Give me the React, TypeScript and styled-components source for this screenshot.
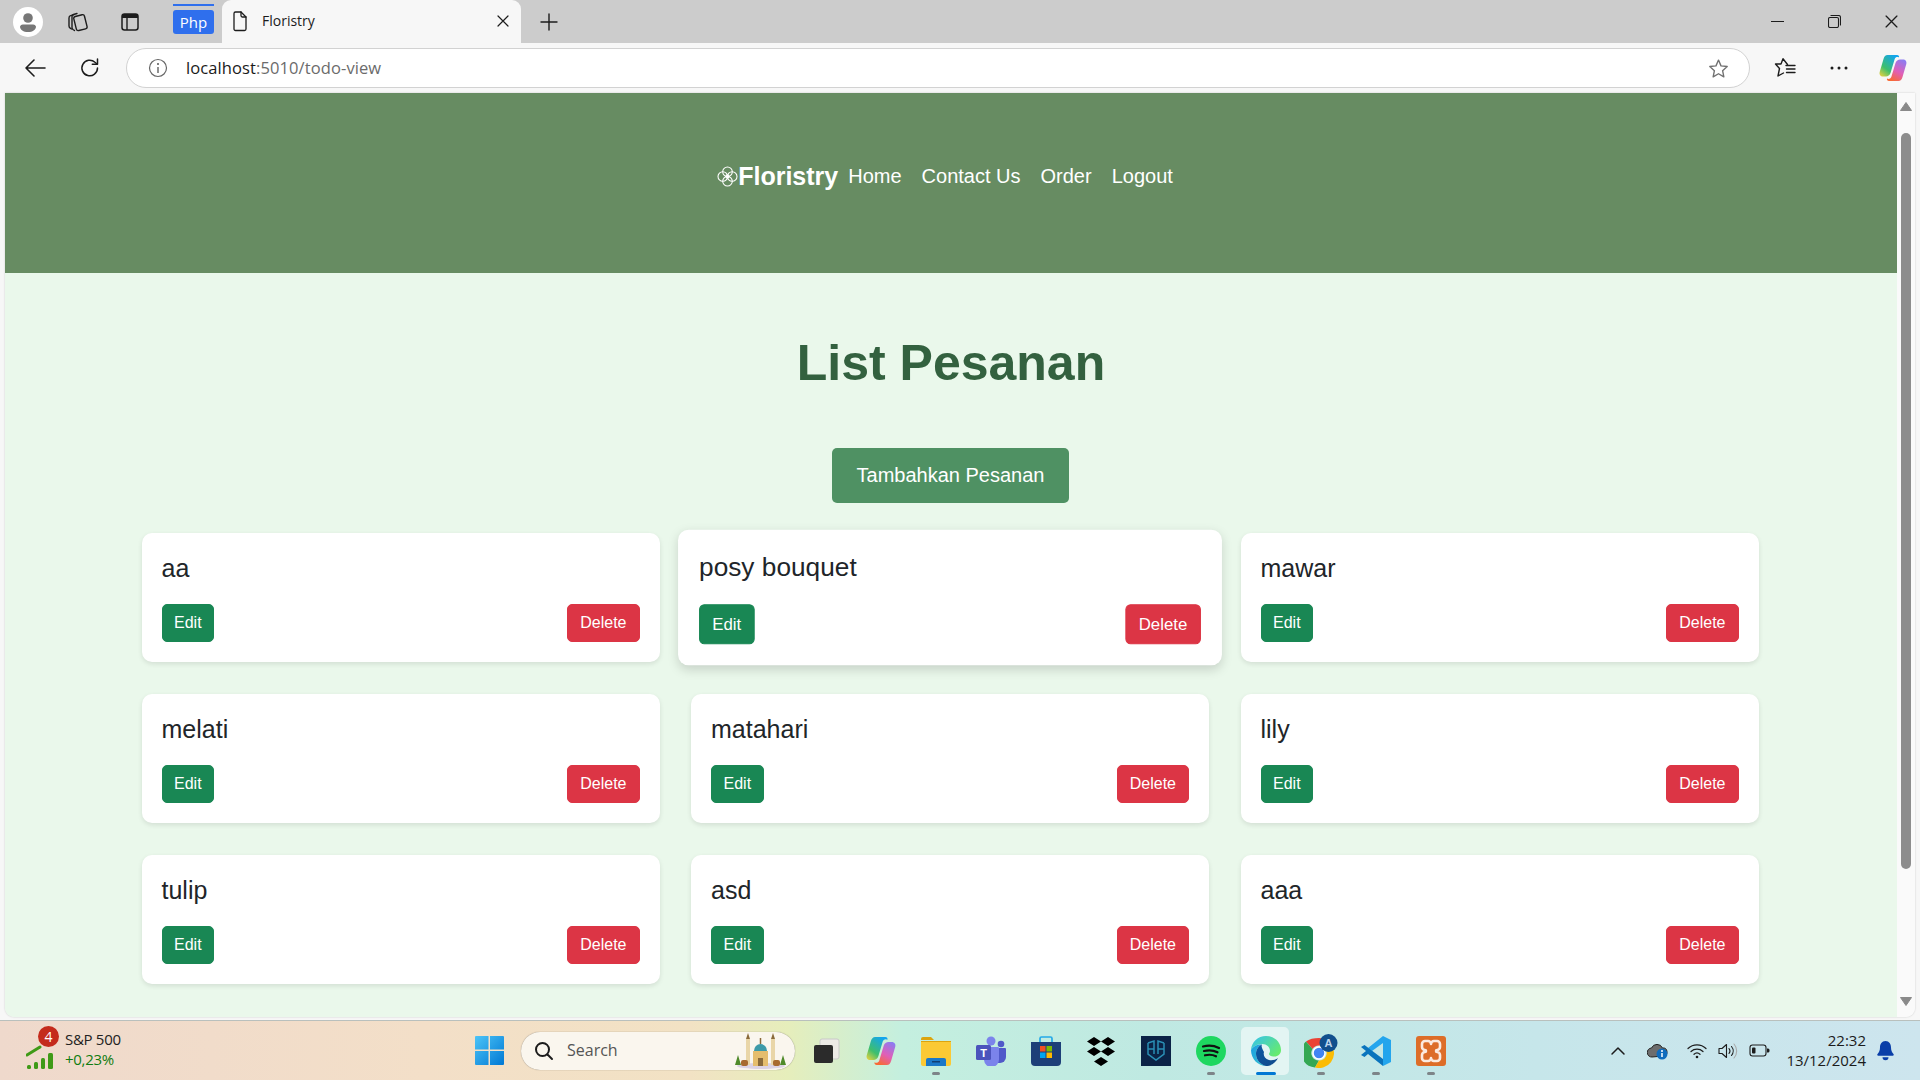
import React from "react";
import styled, { createGlobalStyle } from "styled-components";

const Global = createGlobalStyle`
  html, body { margin: 0; padding: 0; height: 100%; overflow: hidden; background: #f7f7f7; }
  #root { height: 100%; }
  * { box-sizing: border-box; }
`;

const Screen = styled.div`
  width: 1920px;
  height: 1080px;
  display: flex;
  flex-direction: column;
  overflow: hidden;
  background: #f7f7f7;
  font-family: "Liberation Sans", Arial, sans-serif;
`;

/* ---------- tab strip ---------- */
const TabStrip = styled.div`
  height: 43px;
  flex: none;
  background: #cccccc;
  display: flex;
  align-items: center;
  padding-left: 13px;
`;
const StripSlot = styled.div<{ $w: number }>`
  width: ${(p) => p.$w}px;
  height: 43px;
  flex: none;
  display: flex;
  align-items: center;
  justify-content: center;
`;
const PhpGroup = styled.div`
  position: relative;
  width: 41px;
  height: 24px;
  margin: 0 8px 0 0;
  flex: none;
  border-radius: 3px;
  background: #2f6fed;
  color: #fff;
  font: 15px "Open Sans", sans-serif;
  display: flex;
  align-items: center;
  justify-content: center;
  &::before {
    content: "";
    position: absolute;
    left: 0;
    right: 0;
    top: -6px;
    height: 2px;
    background: #2f6fed;
  }
`;
const ActiveTab = styled.div`
  width: 299px;
  height: 43px;
  flex: none;
  background: #f7f7f7;
  border-radius: 9px 9px 0 0;
  display: flex;
  align-items: center;
  padding: 0 12px 2px 9px;
  gap: 13px;
  color: #1c1c1c;
  font: 14px "Open Sans", sans-serif;
`;
const TabTitle = styled.span`
  flex: 1;
`;
const WindowControls = styled.div`
  margin-left: auto;
  display: flex;
  align-items: center;
  gap: 44px;
  padding-right: 22px;
`;

/* ---------- address bar ---------- */
const Toolbar = styled.div`
  height: 50px;
  flex: none;
  background: #f7f7f7;
  display: flex;
  align-items: center;
  padding-left: 24px;
`;
const ToolSlot = styled.div<{ $w: number }>`
  width: ${(p) => p.$w}px;
  height: 24px;
  flex: none;
  display: flex;
  align-items: center;
  justify-content: center;
`;
const AddressBar = styled.div`
  width: 1624px;
  height: 40px;
  flex: none;
  background: #fff;
  border: 1px solid #d2d2d2;
  border-radius: 20px;
  display: flex;
  align-items: center;
  padding: 0 20px 0 21px;
  font: 16.5px "Open Sans", sans-serif;
  color: #1a1a1a;
`;
const Url = styled.span`
  margin-left: 18px;
  padding-bottom: 2px;
  flex: 1;
  letter-spacing: 0.1px;
`;
const UrlRest = styled.span`
  color: #6b6b6b;
`;
const ToolActions = styled.div`
  display: flex;
  align-items: center;
  margin-left: 24px;
  gap: 33px;
`;
const CopilotSlot = styled.div`
  display: flex;
  margin-left: -3px;
`;

/* ---------- page ---------- */
const Viewport = styled.div`
  height: 924px;
  flex: none;
  margin: 0 5px 0 5px;
  display: flex;
  overflow: hidden;
  border-radius: 0 0 9px 9px;
  box-shadow: 0 0 2px rgba(0, 0, 0, 0.2);
`;
const Page = styled.div`
  flex: 1;
  min-width: 0;
  background: #eaf8eb;
  overflow: hidden;
`;
const Header = styled.header`
  height: 180px;
  background: #678c62;
  display: flex;
  justify-content: center;
  align-items: flex-start;
  padding: 68px 12px 0 0;
  color: #fff;
`;
const Brand = styled.a`
  display: flex;
  align-items: center;
  font-size: 25px;
  font-weight: 700;
  line-height: 30px;
  margin-right: 10px;
  color: #fff;
`;
const NavList = styled.nav`
  display: flex;
  gap: 20px;
  font-size: 20px;
  line-height: 30px;
`;
const NavLink = styled.a`
  color: #fff;
`;
const Main = styled.main`
  display: flex;
  flex-direction: column;
  align-items: center;
  padding: 60px 0 0;
`;
const Title = styled.h1`
  margin: 0;
  font-size: 50px;
  line-height: 60px;
  font-weight: 700;
  color: #33613f;
`;
const AddButton = styled.button`
  margin: 55px 1px 0 0;
  width: 237px;
  height: 55px;
  border: none;
  border-radius: 5px;
  background: #4f9163;
  color: #fff;
  font: 20px "Liberation Sans", Arial, sans-serif;
  padding-top: 1px;
`;
const Grid = styled.div`
  margin: 30px 2px 0 0;
  display: grid;
  grid-template-columns: repeat(3, 518px);
  column-gap: 31.500px;
  row-gap: 32px;
`;
const Card = styled.div<{ $hover?: boolean }>`
  height: 129px;
  padding: 20px;
  background: #fff;
  border-radius: 10px;
  display: flex;
  flex-direction: column;
  box-shadow: ${(p) =>
    p.$hover ? "0 4px 10px rgba(0,0,0,.15)" : "0 2px 5px rgba(0,0,0,.1)"};
  transform: ${(p) => (p.$hover ? "scale(1.05)" : "none")};
`;
const CardTitle = styled.h5`
  margin: 0;
  font-size: 25px;
  line-height: 30px;
  font-weight: 400;
  color: #212529;
`;
const CardActions = styled.div`
  margin-top: auto;
  display: flex;
  justify-content: space-between;
`;
const ActionButton = styled.button<{ $danger?: boolean }>`
  height: 38px;
  padding: 0 ${(p) => (p.$danger ? 12 : 11.5)}px;
  border: 1px solid ${(p) => (p.$danger ? "#dc3545" : "#198754")};
  border-radius: 5px;
  background: ${(p) => (p.$danger ? "#dc3545" : "#198754")};
  color: #fff;
  font: 16px "Liberation Sans", Arial, sans-serif;
`;

/* ---------- scrollbar ---------- */
const Scrollbar = styled.div`
  width: 18px;
  flex: none;
  background: #fafafa;
  display: flex;
  flex-direction: column;
  align-items: center;
  padding-top: 9px;
`;
const ScrollThumb = styled.div`
  margin-top: 22px;
  width: 10px;
  height: 736px;
  border-radius: 5px;
  background: #8d8d8d;
`;
const ScrollDown = styled.div`
  margin-top: auto;
  margin-bottom: 7px;
`;

/* ---------- taskbar ---------- */
const Taskbar = styled.div`
  margin-top: 3px;
  height: 60px;
  flex: none;
  display: flex;
  align-items: center;
  border-top: 1px solid #b9c0bd;
  background: linear-gradient(
    90deg,
    #efd9cc 0%,
    #f3dfc8 22%,
    #f2e2c4 36%,
    #e6eebb 41%,
    #c4efdf 47%,
    #bfe9e2 60%,
    #c6e6ea 80%,
    #cde5ee 100%
  );
`;
const Widget = styled.div`
  position: relative;
  width: 475px;
  flex: none;
  padding-left: 26px;
  display: flex;
  align-items: center;
  gap: 9px;
`;
const Badge = styled.span`
  position: absolute;
  left: 38px;
  top: -3px;
  width: 21px;
  height: 21px;
  border-radius: 50%;
  background: #c42b1c;
  color: #fff;
  font: 14px/21px "Open Sans", sans-serif;
  text-align: center;
`;
const WidgetText = styled.div`
  display: flex;
  flex-direction: column;
  margin-bottom: 3px;
  font: 15px/20px "Open Sans", sans-serif;
  letter-spacing: -0.3px;
  color: #222;
`;
const WidgetDelta = styled.span`
  color: #107c10;
`;
const StartSlot = styled.div`
  width: 46px;
  flex: none;
  display: flex;
`;
const SearchBox = styled.div`
  width: 274px;
  height: 38px;
  flex: none;
  border-radius: 19px;
  background: #faf6ee;
  box-shadow: 0 0 1px rgba(0, 0, 0, 0.5);
  display: flex;
  align-items: center;
  padding: 0 6px 0 13px;
  gap: 13px;
  font: 16px "Open Sans", sans-serif;
  color: #555;
`;
const SearchLabel = styled.span`
  flex: 1;
  padding-bottom: 1px;
`;
const AppRow = styled.div`
  display: flex;
  margin-left: 3px;
`;
const AppSlot = styled.div<{ $active?: boolean; $dot?: boolean }>`
  position: relative;
  width: 55px;
  height: 48px;
  display: flex;
  align-items: center;
  justify-content: center;
  &::before {
    content: "";
    position: absolute;
    left: 3px;
    right: 4px;
    top: 0;
    bottom: 0;
    border-radius: 5px;
    background: ${(p) => (p.$active ? "rgba(255,255,255,.55)" : "transparent")};
  }
  &::after {
    content: "";
    display: ${(p) => (p.$dot || p.$active ? "block" : "none")};
    position: absolute;
    left: 50%;
    bottom: 0;
    transform: translateX(-50%);
    width: ${(p) => (p.$active ? 20 : 8)}px;
    height: 3px;
    border-radius: 2px;
    background: ${(p) => (p.$active ? "#0078d4" : "#7d8488")};
  }
  svg {
    position: relative;
    z-index: 1;
  }
`;
const Tray = styled.div`
  margin-left: auto;
  display: flex;
  align-items: center;
  padding-right: 26px;
`;
const TrayIcon = styled.div<{ $w: number }>`
  width: ${(p) => p.$w}px;
  display: flex;
  justify-content: center;
  flex: none;
`;
const Clock = styled.div`
  width: 88px;
  margin-bottom: 2px;
  text-align: right;
  font: 15px/20px "Open Sans", sans-serif;
  color: #1b1b1b;
`;
const BellSlot = styled.div`
  margin-left: 11px;
  display: flex;
`;

/* ---------- icons ---------- */
type IP = { s?: number };
const stroke = { fill: "none", stroke: "#1c1c1c", strokeWidth: 1.4, strokeLinecap: "round", strokeLinejoin: "round" } as const;

const Profile = () => (
  <svg width="30" height="30" viewBox="0 0 30 30">
    <circle cx="15" cy="15" r="15" fill="#fff" />
    <circle cx="15" cy="11" r="4.8" fill="#777" />
    <path d="M7 19.5a3 3 0 0 1 3-2h10a3 3 0 0 1 3 2c0 3.5-3.5 5.5-8 5.5s-8-2-8-5.5z" fill="#777" />
  </svg>
);
const Collections = () => (
  <svg width="22" height="22" viewBox="0 0 22 22" {...stroke}>
    <path d="M3 7c0-1 .6-2 1.6-2.3L8 3.6M5.500 18l-1-.6C3.500 16.800 3 15.800 3 15V7" />
    <path d="M6 5.500c0-1 .7-1.700 1.500-2L11 2.500M8.500 19.500 7 18.500c-.7-.5-1-1.200-1-2V5.500" />
    <rect x="9" y="4.500" width="11" height="14.500" rx="2" transform="rotate(-14 14 12)" />
  </svg>
);
const VerticalTabs = () => (
  <svg width="20" height="20" viewBox="0 0 20 20">
    <rect x="2" y="2" width="16" height="16" rx="2.500" fill="none" stroke="#1c1c1c" strokeWidth="1.500" />
    <path d="M2 4.500a2.500 2.500 0 0 1 2.500-2.500h11a2.500 2.500 0 0 1 2.500 2.500V6H2z" fill="#1c1c1c" />
    <path d="M7 6v12" stroke="#1c1c1c" strokeWidth="1.400" />
  </svg>
);
const Doc = () => (
  <svg width="18" height="22" viewBox="0 0 18 22" {...stroke} strokeWidth={1.3}>
    <path d="M3 3.500A1.500 1.500 0 0 1 4.500 2H10l5 5v12a1.500 1.500 0 0 1-1.500 1.500h-9A1.500 1.500 0 0 1 3 19z" />
    <path d="M10 2v3.500A1.500 1.500 0 0 0 11.500 7H15" />
  </svg>
);
const Cross = ({ s = 12 }: IP) => (
  <svg width={s} height={s} viewBox="0 0 12 12" {...stroke} strokeWidth={1.2}>
    <path d="M1 1l10 10M11 1L1 11" />
  </svg>
);
const Plus = () => (
  <svg width="18" height="18" viewBox="0 0 18 18" {...stroke} strokeWidth={1.4}>
    <path d="M9 1v16M1 9h16" />
  </svg>
);
const Minimize = () => (
  <svg width="13" height="13" viewBox="0 0 13 13" {...stroke} strokeWidth={1.1}>
    <path d="M0 6.500h13" />
  </svg>
);
const Restore = () => (
  <svg width="13" height="13" viewBox="0 0 13 13" {...stroke} strokeWidth={1.1}>
    <rect x="0.500" y="2.500" width="10" height="10" rx="1.500" />
    <path d="M3 .500h7.500a2 2 0 0 1 2 2V10" />
  </svg>
);
const Back = () => (
  <svg width="22" height="20" viewBox="0 0 22 20" {...stroke} strokeWidth={1.6}>
    <path d="M21 10H2M10 2l-8 8 8 8" />
  </svg>
);
const Refresh = () => (
  <svg width="22" height="22" viewBox="0 0 22 22" {...stroke} strokeWidth={1.5}>
    <path d="M18.500 11a7.800 7.800 0 1 1-2.500-5.700L18 7" />
    <path d="M18.500 2v5.200h-5.200" />
  </svg>
);
const Info = () => (
  <svg width="20" height="20" viewBox="0 0 20 20">
    <circle cx="10" cy="10" r="8.500" fill="none" stroke="#666" strokeWidth="1.200" />
    <circle cx="10" cy="6" r="1" fill="#555" />
    <path d="M10 9v6" stroke="#555" strokeWidth="1.300" />
  </svg>
);
const StarPts = "10,2 12.400,7.500 18.300,8.100 13.900,12.100 15.100,18 10,15 4.900,18 6.100,12.100 1.700,8.100 7.600,7.500";
const Star = () => (
  <svg width="21" height="21" viewBox="0 0 20 20">
    <polygon points={StarPts} fill="none" stroke="#707070" strokeWidth="1.300" strokeLinejoin="round" />
  </svg>
);
const Favorites = () => (
  <svg width="22" height="22" viewBox="0 0 22 22" {...stroke} strokeWidth={1.4}>
    <path d="M13.500 7.500 9 1.800 7 7H1.500L5.500 11.500 4 19l5.500-3" />
    <path d="M12 8.500h9M12.500 12h8.500M12.500 15.500h8.500" />
  </svg>
);
const More = () => (
  <svg width="20" height="6" viewBox="0 0 20 6">
    <circle cx="3" cy="3" r="1.500" fill="#1c1c1c" />
    <circle cx="10" cy="3" r="1.500" fill="#1c1c1c" />
    <circle cx="17" cy="3" r="1.500" fill="#1c1c1c" />
  </svg>
);
const Copilot = ({ id, s = 28 }: { id: string; s?: number }) => (
  <svg width={s} height={s} viewBox="0 0 28 28">
    <defs>
      <linearGradient id={`${id}a`} x1="0" y1="1" x2="0.700" y2="0">
        <stop offset="0" stopColor="#f5d33c" />
        <stop offset="0.400" stopColor="#3fbf6c" />
        <stop offset="1" stopColor="#12a5ee" />
      </linearGradient>
      <linearGradient id={`${id}b`} x1="0.300" y1="1" x2="0.800" y2="0">
        <stop offset="0" stopColor="#f86a35" />
        <stop offset="0.450" stopColor="#e05fb8" />
        <stop offset="1" stopColor="#8b7cf2" />
      </linearGradient>
    </defs>
    <path d="M8.500 1H18c1.500 0 2.500 1.200 2 2.500-1.500-1-3.500-.5-4.300 1.500L11.500 19c-.8 2.300-2.500 3.500-4.500 3.500H4C1.500 22.500 0 20.500.7 18L4.500 5C5.200 2.500 6.500 1 8.500 1z" fill={`url(#${id}a)`} />
    <path d="M19.500 27H10c-1.500 0-2.500-1.200-2-2.500 1.500 1 3.500.5 4.300-1.500L16.500 9c.8-2.300 2.500-3.500 4.500-3.500h3c2.500 0 4 2 3.300 4.500L23.500 23c-.7 2.500-2 4-4 4z" fill={`url(#${id}b)`} />
  </svg>
);
const Flower = () => (
  <svg width="21" height="21" viewBox="0 0 21 21" fill="none" stroke="#fff" strokeWidth="1.100">
    <circle cx="10.500" cy="5.800" r="4.800" />
    <circle cx="10.500" cy="15.200" r="4.800" />
    <circle cx="5.800" cy="10.500" r="4.800" />
    <circle cx="15.200" cy="10.500" r="4.800" />
    <circle cx="10.500" cy="10.500" r="1.600" fill="#fff" />
  </svg>
);
const ScrollArrow = ({ down }: { down?: boolean }) => (
  <svg width="12" height="9" viewBox="0 0 12 9">
    <path d={down ? "M0.500 0.500h11L6 8.500z" : "M6 .5l5.500 8H.5z"} fill="#8a8a8a" stroke="#8a8a8a" strokeLinejoin="round" />
  </svg>
);
const Signal = () => (
  <svg width="30" height="36" viewBox="0 0 30 36">
    <path d="M1 22 14 14" stroke="#3f9a17" strokeWidth="3" strokeLinecap="round" fill="none" />
    <rect x="1" y="32" width="4" height="4" rx="1.500" fill="#3f9a17" />
    <rect x="8" y="29" width="4" height="7" rx="1.500" fill="#3f9a17" />
    <rect x="15" y="25" width="4" height="11" rx="1.500" fill="#3f9a17" />
    <rect x="22" y="20" width="5" height="16" rx="1.500" fill="#3f9a17" />
  </svg>
);
const Windows = () => (
  <svg width="29" height="29" viewBox="0 0 29 29">
    <defs>
      <linearGradient id="win" x1="0" y1="0" x2="1" y2="1">
        <stop offset="0" stopColor="#4cc4f7" />
        <stop offset="1" stopColor="#0078d4" />
      </linearGradient>
    </defs>
    <path d="M1 0h12.500v13.500H0V1a1 1 0 0 1 1-1zM15 0h13a1 1 0 0 1 1 1v12.500H15zM0 15h13.500v14H1a1 1 0 0 1-1-1zM15 15h14v13a1 1 0 0 1-1 1H15z" fill="url(#win)" />
  </svg>
);
const SearchIcon = () => (
  <svg width="20" height="20" viewBox="0 0 20 20" fill="none" stroke="#1c1c1c" strokeWidth="2" strokeLinecap="round">
    <circle cx="8.500" cy="8.500" r="6.500" />
    <path d="M13.500 13.500 18 18" />
  </svg>
);
const Mosque = () => (
  <svg width="56" height="36" viewBox="0 0 56 36">
    <ellipse cx="28" cy="33" rx="24" ry="3" fill="#dcd3e4" />
    <rect x="13" y="6" width="4" height="26" fill="#e9d6a8" />
    <rect x="38" y="6" width="4" height="26" fill="#e9d6a8" />
    <path d="M13 6l2-6 2 6zM38 6l2-6 2 6z" fill="#8a6a3a" />
    <rect x="20" y="18" width="15" height="15" fill="#e5bd6d" />
    <path d="M21 18a6.500 7 0 0 1 13 0z" fill="#3d9aa8" />
    <path d="M27.500 5v6" stroke="#8a6a3a" strokeWidth="1.500" />
    <rect x="25" y="25" width="5" height="8" fill="#8a6a3a" />
    <path d="M2 32l3-10 3 10zM47 32l3-10 3 10z" fill="#4f8a2a" />
    <rect x="8" y="27" width="7" height="6" rx="2" fill="#a86a2f" />
    <rect x="40" y="27" width="7" height="6" rx="2" fill="#a86a2f" />
  </svg>
);
const TaskView = () => (
  <svg width="28" height="28" viewBox="0 0 28 28">
    <rect x="8" y="2" width="19" height="20" rx="2" fill="#eceae6" stroke="#c9c9c9" />
    <rect x="2" y="8" width="19" height="18" rx="2" fill="#2b2b2b" />
  </svg>
);
const Explorer = () => (
  <svg width="30" height="30" viewBox="0 0 30 30">
    <path d="M0 3a2 2 0 0 1 2-2h8l3 3h-13z" fill="#dca40e" />
    <path d="M0 5h28a2 2 0 0 1 2 2v21a2 2 0 0 1-2 2H2a2 2 0 0 1-2-2z" fill="#fbc934" />
    <path d="M0 5h30v1H0z" fill="#dca40e" />
    <path d="M5 24a2 2 0 0 1 2-2h16a2 2 0 0 1 2 2v6H5z" fill="#1a78c8" />
    <rect x="11" y="25" width="8" height="1.500" fill="#0f3f74" />
  </svg>
);
const Teams = () => (
  <svg width="30" height="30" viewBox="0 0 30 30">
    <circle cx="15" cy="5" r="4.500" fill="#7b83eb" />
    <circle cx="25" cy="8" r="3.300" fill="#5059c9" />
    <path d="M20 12h9a1 1 0 0 1 1 1v8a6 6 0 0 1-6 6h-4z" fill="#5059c9" />
    <path d="M8 11h14a1 1 0 0 1 1 1v11a7 7 0 0 1-15 1z" fill="#7b83eb" />
    <rect x="0" y="9" width="15" height="15" rx="1.500" fill="#4b53bc" />
    <text x="7.500" y="21" textAnchor="middle" fontSize="11" fontWeight="700" fill="#fff" fontFamily="Liberation Sans">T</text>
  </svg>
);
const Store = () => (
  <svg width="30" height="30" viewBox="0 0 30 30">
    <path d="M9 6V2.500A1.500 1.500 0 0 1 10.500 1h9A1.500 1.500 0 0 1 21 2.500V6" fill="none" stroke="#25a9e8" strokeWidth="1.700" />
    <path d="M0 6h30v20a4 4 0 0 1-4 4H4a4 4 0 0 1-4-4z" fill="#1d3f78" />
    <rect x="9" y="10" width="5.500" height="5.500" fill="#f25022" />
    <rect x="15.500" y="10" width="5.500" height="5.500" fill="#7fba00" />
    <rect x="9" y="16.500" width="5.500" height="5.500" fill="#00a4ef" />
    <rect x="15.500" y="16.500" width="5.500" height="5.500" fill="#ffb900" />
  </svg>
);
const Dropbox = () => (
  <svg width="30" height="30" viewBox="0 0 30 30" fill="#000">
    <path d="M8 1 15 5.500 8 10 1 5.500zM22 1 29 5.500 22 10 15 5.500zM8 11 15 15.500 8 20 1 15.500zM22 11 29 15.500 22 20 15 15.500zM15 21 22 25.500 15 30 8 25.500z" />
  </svg>
);
const Shield = () => (
  <svg width="30" height="30" viewBox="0 0 30 30">
    <rect width="30" height="30" fill="#0b2347" />
    <path d="M7 7l6-2v13M23 7l-6-2v13M7 7v11l8 6 8-6V7M7 13h6M17 13h6" fill="none" stroke="#2a8fb5" strokeWidth="1.500" />
  </svg>
);
const Spotify = () => (
  <svg width="30" height="30" viewBox="0 0 30 30">
    <circle cx="15" cy="15" r="15" fill="#1ed760" />
    <path d="M7 10.500c5-1.300 11-1 16 1.500M8 15c4.500-1.100 9.500-.8 13.500 1.300M9 19.300c3.700-.9 7.700-.7 11 1" fill="none" stroke="#111" strokeWidth="2.200" strokeLinecap="round" />
  </svg>
);
const Edge = () => (
  <svg width="30" height="30" viewBox="0 0 30 30">
    <defs>
      <linearGradient id="edgeA" x1="0" y1="0" x2="1" y2="1">
        <stop offset="0" stopColor="#0c59a4" />
        <stop offset="1" stopColor="#114a8b" />
      </linearGradient>
      <linearGradient id="edgeB" x1="0" y1="0" x2="1" y2="1">
        <stop offset="0" stopColor="#1b9de2" />
        <stop offset="1" stopColor="#37c6d0" />
      </linearGradient>
      <linearGradient id="edgeC" x1="0" y1="0" x2="1" y2="0.700">
        <stop offset="0" stopColor="#35c1f1" />
        <stop offset="1" stopColor="#66eb6e" />
      </linearGradient>
    </defs>
    <path d="M15 0C24 0 30 6.500 30 14c0 4-3 6.500-6.500 6.500-3 0-5.500-1-5.500-2.500 0-.8 1-1.200 1-3C19 11 15.500 8 11.500 8 6 8 1.500 11 0 14 .5 6 7 0 15 0z" fill="url(#edgeC)" />
    <path d="M0 14c2-4 7-6 11-5.500-4.500 2-6 6-6 9.500 0 6 5 11 10.500 12C7 30 0 23 0 14z" fill="url(#edgeB)" />
    <path d="M13 16c-1 3 .5 7 5 8 3 .6 6.500 0 9-2-2.500 5-7 8-12 8-5-1-10-6-10-12 0-3.500 1.500-7.500 6-9.500-.8 1.500-.5 3 2 7.500z" fill="url(#edgeA)" />
  </svg>
);
const Chrome = () => (
  <svg width="34" height="34" viewBox="0 0 34 34">
    <g transform="translate(0 4)">
      <path d="M15 0a15 15 0 0 1 13 7.500H15A7.500 7.500 0 0 0 8.500 11L2 3.500C5 1 10 0 15 0z" fill="#ea4335" />
      <path d="M2 3.500 8.500 11A7.500 7.500 0 0 0 15 22.500L11 29.500A15 15 0 0 1 2 3.500z" fill="#34a853" />
      <path d="M28 7.500A15 15 0 0 1 11 29.500l4-7A7.500 7.500 0 0 0 21.500 11z" fill="#fbbc04" />
      <circle cx="15" cy="15" r="6" fill="#4285f4" stroke="#fff" strokeWidth="1.500" />
    </g>
    <circle cx="24.500" cy="9" r="9" fill="#114f8d" />
    <text x="24.500" y="13" textAnchor="middle" fontSize="11" fontWeight="700" fill="#bcd5ee" fontFamily="Liberation Sans">A</text>
  </svg>
);
const VSCode = () => (
  <svg width="30" height="30" viewBox="0 0 30 30">
    <path d="M22 0 30 4v22l-8 4V7L11 15l-4-3z" fill="#23a5ed" />
    <path d="M22 30 7 18 3.500 21 0 19l5-4-5-4 3.500-2L22 23z" fill="#0a74bd" />
  </svg>
);
const Xampp = () => (
  <svg width="30" height="30" viewBox="0 0 30 30">
    <rect width="30" height="30" rx="3" fill="#dd6d28" />
    <path d="M9 5h3a3 3 0 0 1 3 3 3 3 0 0 1 3-3h3a3 3 0 0 1 3 3v3a3 3 0 0 1-3 3 1 1 0 0 0 0 2 3 3 0 0 1 3 3v3a3 3 0 0 1-3 3h-3a3 3 0 0 1-3-3 3 3 0 0 1-3 3H9a3 3 0 0 1-3-3v-3a3 3 0 0 1 3-3 1 1 0 0 0 0-2 3 3 0 0 1-3-3V8a3 3 0 0 1 3-3z" fill="none" stroke="#fbeadf" strokeWidth="2.600" strokeLinejoin="round" />
  </svg>
);
const Chevron = () => (
  <svg width="16" height="10" viewBox="0 0 16 10" fill="none" stroke="#1c1c1c" strokeWidth="1.500" strokeLinecap="round" strokeLinejoin="round">
    <path d="M2 8l6-6 6 6" />
  </svg>
);
const Cloud = () => (
  <svg width="22" height="18" viewBox="0 0 22 18">
    <path d="M5 15a4.500 4.500 0 0 1-.5-9A6 6 0 0 1 15.500 6a4 4 0 0 1 1 8z" fill="#6d6d6d" stroke="#222" strokeWidth="1" />
    <circle cx="15" cy="12" r="5.500" fill="#0f6cbd" />
    <path d="M15 11v4" stroke="#fff" strokeWidth="1.500" />
    <circle cx="15" cy="9" r="1" fill="#fff" />
  </svg>
);
const Wifi = () => (
  <svg width="20" height="16" viewBox="0 0 20 16" fill="none" stroke="#1c1c1c" strokeWidth="1.200" strokeLinecap="round">
    <path d="M1 5.500a13 13 0 0 1 18 0M4 8.500a9 9 0 0 1 12 0M7 11.300a4.500 4.500 0 0 1 6 0" />
    <circle cx="10" cy="14" r="1.300" fill="#1c1c1c" stroke="none" />
  </svg>
);
const Volume = () => (
  <svg width="20" height="18" viewBox="0 0 20 18" fill="none" stroke="#1c1c1c" strokeWidth="1.100" strokeLinecap="round" strokeLinejoin="round">
    <path d="M1 6.500v5h3l4.500 4v-13L4 6.500z" />
    <path d="M11 6.500a4 4 0 0 1 0 5M13.500 4.500a7 7 0 0 1 0 9" />
    <path d="M16 2a10.500 10.500 0 0 1 0 14" stroke="#aaa" />
  </svg>
);
const Battery = () => (
  <svg width="21" height="14" viewBox="0 0 21 14">
    <rect x="1" y="1" width="16" height="11" rx="2.500" fill="none" stroke="#1c1c1c" strokeWidth="1.100" />
    <rect x="3" y="3.500" width="3.500" height="6" rx="1" fill="#1c1c1c" />
    <path d="M18 4.500h1a1.500 1.500 0 0 1 1.500 1.500v1A1.500 1.500 0 0 1 19 8.500h-1z" fill="#1c1c1c" />
  </svg>
);
const Bell = () => (
  <svg width="17" height="20" viewBox="0 0 17 20" fill="#0a3ea8">
    <path d="M8.500 0C4.800 0 3 3 3 6.500c0 3-1 5-2.500 6.500-.5.700-.2 1.800.8 1.800h14.400c1 0 1.300-1.100.8-1.800C15 11.500 14 9.500 14 6.500 14 3 12.200 0 8.500 0z" />
    <path d="M5.500 16.300a3 3 0 0 0 6 0z" />
  </svg>
);

const rows = [
  ["aa", "posy bouquet", "mawar"],
  ["melati", "matahari", "lily"],
  ["tulip", "asd", "aaa"],
];

export default function App() {
  return (
    <Screen>
      <Global />
      <TabStrip>
        <StripSlot $w={30}><Profile /></StripSlot>
        <StripSlot $w={68}><Collections /></StripSlot>
        <StripSlot $w={38}><VerticalTabs /></StripSlot>
        <StripSlot $w={24} />
        <PhpGroup>Php</PhpGroup>
        <ActiveTab>
          <Doc />
          <TabTitle>Floristry</TabTitle>
          <Cross />
        </ActiveTab>
        <StripSlot $w={55}><Plus /></StripSlot>
        <WindowControls>
          <Minimize />
          <StripSlot $w={13}><Restore /></StripSlot>
          <Cross s={13} />
        </WindowControls>
      </TabStrip>
      <Toolbar>
        <ToolSlot $w={22}><Back /></ToolSlot>
        <ToolSlot $w={33} />
        <ToolSlot $w={22}><Refresh /></ToolSlot>
        <ToolSlot $w={25} />
        <AddressBar>
          <Info />
          <Url>localhost<UrlRest>:5010/todo-view</UrlRest></Url>
          <Star />
        </AddressBar>
        <ToolActions>
          <Favorites />
          <More />
          <CopilotSlot><Copilot id="cp1" /></CopilotSlot>
        </ToolActions>
      </Toolbar>
      <Viewport>
        <Page>
          <Header>
            <Brand><Flower />Floristry</Brand>
            <NavList>
              <NavLink>Home</NavLink>
              <NavLink>Contact Us</NavLink>
              <NavLink>Order</NavLink>
              <NavLink>Logout</NavLink>
            </NavList>
          </Header>
          <Main>
            <Title>List Pesanan</Title>
            <AddButton>Tambahkan Pesanan</AddButton>
            <Grid>
              {rows.flat().map((name) => (
                <Card key={name} $hover={name === "posy bouquet"}>
                  <CardTitle>{name}</CardTitle>
                  <CardActions>
                    <ActionButton>Edit</ActionButton>
                    <ActionButton $danger>Delete</ActionButton>
                  </CardActions>
                </Card>
              ))}
            </Grid>
          </Main>
        </Page>
        <Scrollbar>
          <ScrollArrow />
          <ScrollThumb />
          <ScrollDown><ScrollArrow down /></ScrollDown>
        </Scrollbar>
      </Viewport>
      <Taskbar>
        <Widget>
          <Signal />
          <Badge>4</Badge>
          <WidgetText>
            <span>S&amp;P 500</span>
            <WidgetDelta>+0,23%</WidgetDelta>
          </WidgetText>
        </Widget>
        <StartSlot><Windows /></StartSlot>
        <SearchBox>
          <SearchIcon />
          <SearchLabel>Search</SearchLabel>
          <Mosque />
        </SearchBox>
        <AppRow>
          <AppSlot><TaskView /></AppSlot>
          <AppSlot><Copilot id="cp2" s={30} /></AppSlot>
          <AppSlot $dot><Explorer /></AppSlot>
          <AppSlot><Teams /></AppSlot>
          <AppSlot><Store /></AppSlot>
          <AppSlot><Dropbox /></AppSlot>
          <AppSlot><Shield /></AppSlot>
          <AppSlot $dot><Spotify /></AppSlot>
          <AppSlot $active><Edge /></AppSlot>
          <AppSlot $dot><Chrome /></AppSlot>
          <AppSlot $dot><VSCode /></AppSlot>
          <AppSlot $dot><Xampp /></AppSlot>
        </AppRow>
        <Tray>
          <TrayIcon $w={40}><Chevron /></TrayIcon>
          <TrayIcon $w={40}><Cloud /></TrayIcon>
          <TrayIcon $w={38}><Wifi /></TrayIcon>
          <TrayIcon $w={24}><Volume /></TrayIcon>
          <TrayIcon $w={38}><Battery /></TrayIcon>
          <Clock>22:32<br />13/12/2024</Clock>
          <BellSlot><Bell /></BellSlot>
        </Tray>
      </Taskbar>
    </Screen>
  );
}
